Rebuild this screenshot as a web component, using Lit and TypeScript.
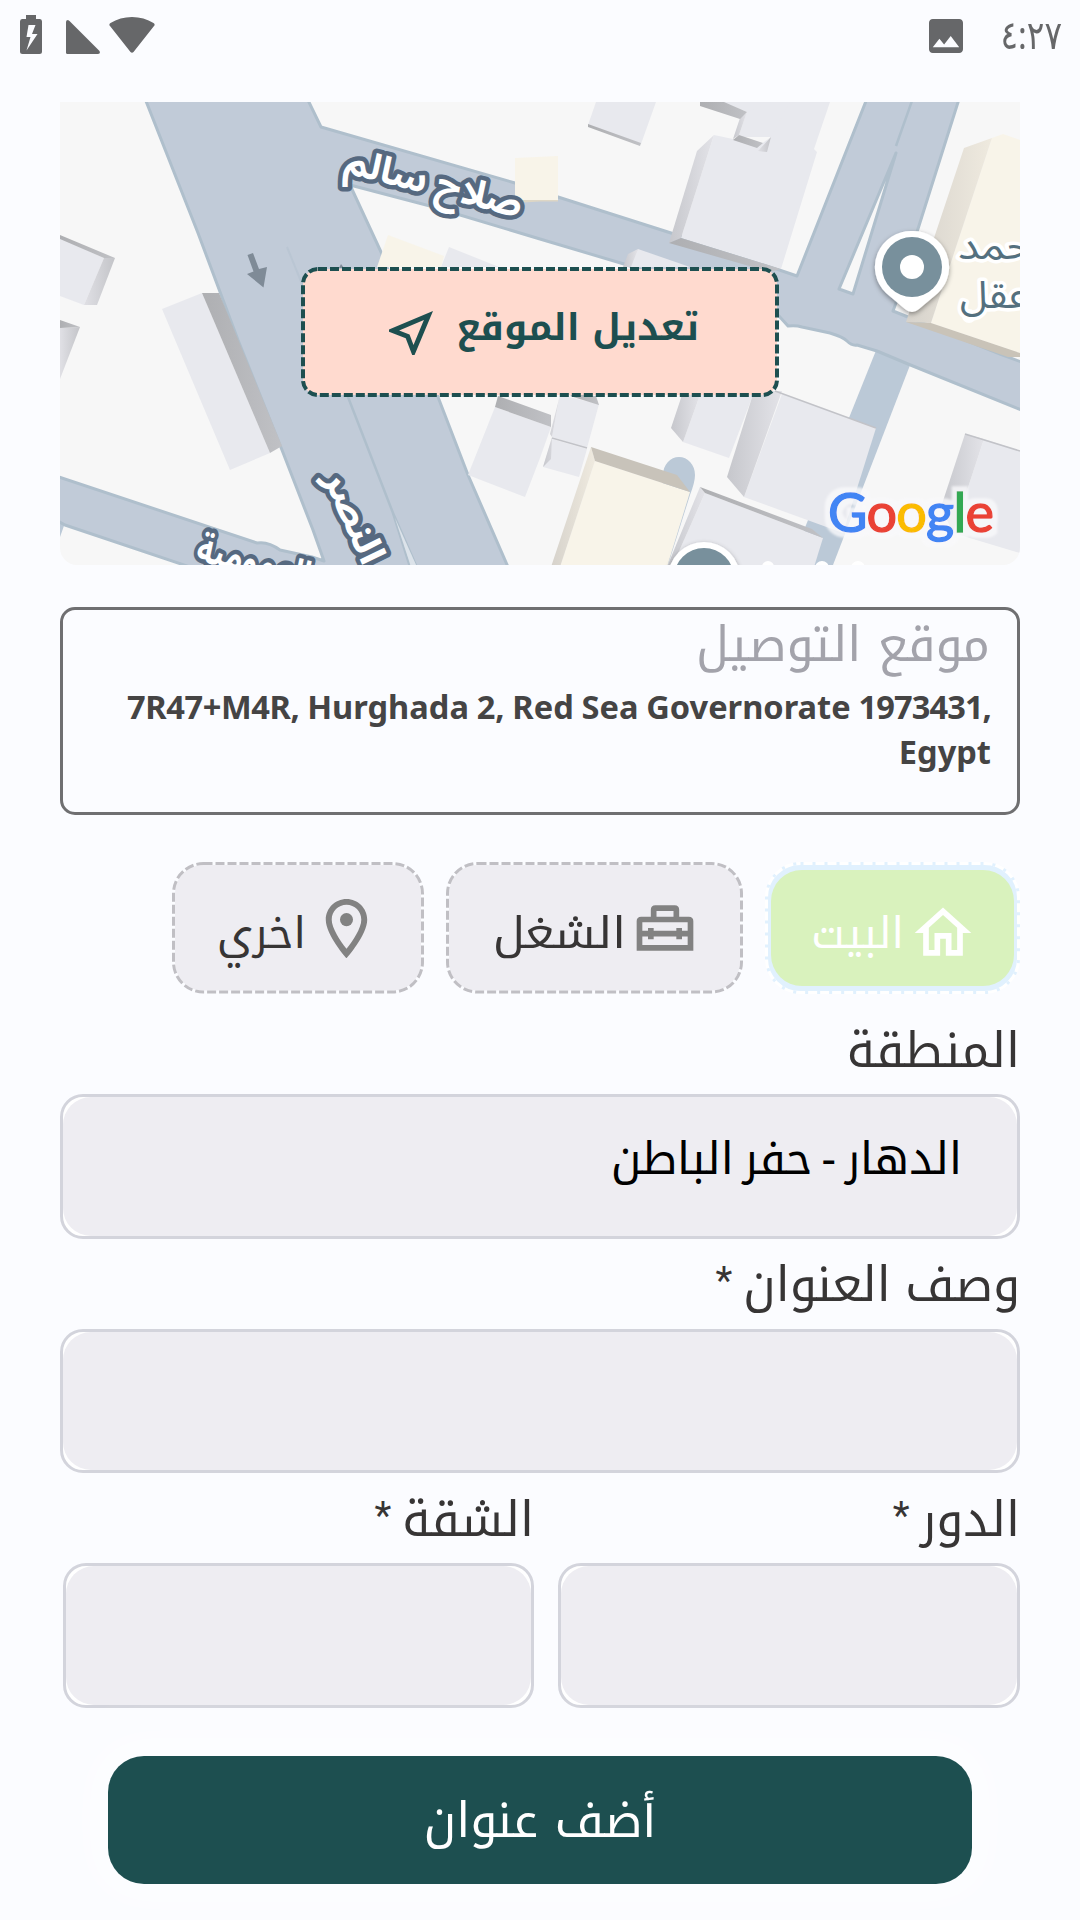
import { LitElement, html, css, svg } from "lit";
import { customElement, property } from "lit/decorators.js";

const HOME = "M12 5.69l5 4.5V18h-2v-6H9v6H7v-7.81l5-4.5M12 3L2 12h3v8h6v-6h2v6h6v-8h3L12 3z";
const WORK =
  "M7 8V5.6Q7 4 8.6 4H15.4Q17 4 17 5.6V8H20.4Q22 8 22 9.6V20H2V9.6Q2 8 3.600 8ZM9 8H15V6H9ZM4 10V13H6V12H8V13H16V12H18V13H20V10ZM4 15V18H20V15H18V16H16V15H8V16H6V15Z";
const PLACE =
  "M12 2C8.13 2 5 5.13 5 9c0 5.25 7 13 7 13s7-7.75 7-13c0-3.870-3.130-7-7-7zM7 9c0-2.760 2.240-5 5-5s5 2.240 5 5c0 2.880-2.880 7.190-5 9.880C9.920 16.210 7 11.850 7 9z";

@customElement("status-bar")
export class StatusBar extends LitElement {
  static styles = css`
    :host { display: flex; direction: rtl; justify-content: space-between; height: 102px; box-sizing: border-box; padding: 15px 18px 0 20px; color: #666769; }
    .side { display: flex; align-items: flex-start; }
    .time { width: 62px; font: 400 39px/38px "Noto Sans", "DejaVu Sans", sans-serif; transform: scaleX(0.84); transform-origin: right center; }
    .photo { margin: 4px 37px 0 0; }
    svg { display: block; fill: currentColor; }
    .wifi { margin: 2px 0 0 9px; }
    .cell { margin: 5px 0 0 24px; }
  `;
  render() {
    return html`
      <div class="side">
        <span class="time">٤:٢٧</span>
        <svg class="photo" width="34" height="34" viewBox="3 3 18 18"><path d="M21 19V5c0-1.100-.9-2-2-2H5c-1.100 0-2 .9-2 2v14c0 1.100.9 2 2 2h14c1.100 0 2-.9 2-2zM8.500 13.500l2.500 3.010L14.500 12l4.500 6H5l3.500-4.500z"/></svg>
      </div>
      <div class="side">
        <svg class="wifi" width="46" height="36" viewBox="0 0 46 36"><path d="M1 9Q-.5 7.500 1.500 6Q11 0 23 0T44.500 6Q46.500 7.500 45 9L24.500 35Q23 36.500 21.500 35Z"/></svg>
        <svg class="cell" width="34" height="34" viewBox="0 0 34 34"><path d="M0 2Q0 0 2 0L3.500 1L33 30.500L34 32Q34 34 32 34H1.500Q0 34 0 32.500Z"/></svg>
        <svg width="22" height="39" viewBox="0 0 22 39"><path fill-rule="evenodd" d="M6 0H16V4H20Q22 4 22 6.500V36.500Q22 39 19.500 39H2.500Q0 39 0 36.500V6.500Q0 4 2 4H6ZM8.500 10L6.500 22H10.500L6.500 35.500L17.500 19H12L15.500 10Z"/></svg>
      </div>`;
  }
}

const road = "#c1cbd8";
const edge = "#afbfcc";

@customElement("location-map")
export class LocationMap extends LitElement {
  static styles = css`
    :host { display: grid; place-items: center; width: 960px; height: 463px; border-radius: 0 0 17px 17px; overflow: hidden; direction: ltr; }
    .canvas, .edit { grid-area: 1 / 1; }
    .canvas { display: block; }
    .street { font: 700 37px "Noto Sans Arabic", "DejaVu Sans", sans-serif; fill: #fff; stroke: #566980; stroke-width: 9px; stroke-linejoin: round; paint-order: stroke; }
    .poi { font: 400 38px "Noto Sans Arabic", "DejaVu Sans", sans-serif; fill: #54707e; stroke: #fff; stroke-width: 7px; stroke-linejoin: round; paint-order: stroke; }
    .brand { font: 400 54px Lato, sans-serif; stroke-width: 1.5px; filter: url(#halo); }
    .edit { position: relative; display: flex; align-items: center; justify-content: space-between; direction: rtl; box-sizing: border-box; width: 478px; height: 130px; margin-bottom: 3px; padding: 0 80px 0 88px; color: #1d4f50; }
    .frame { position: absolute; inset: 0; }
    .caption { position: relative; font: 700 37.200px/60px "Noto Kufi Arabic", "DejaVu Sans", sans-serif; white-space: nowrap; margin-bottom: 8px; }
    .near { position: relative; margin-top: 1px; fill: currentColor; }
  `;
  render() {
    return html`
      <svg class="canvas" width="960" height="463" viewBox="60 102 960 463">
        <defs>
          <linearGradient id="wall" x1="0" x2="1"><stop offset="0" stop-color="#c6c7cc"/><stop offset="1" stop-color="#e3e3e8"/></linearGradient>
          <linearGradient id="wallR" x1="1" x2="0"><stop offset="0" stop-color="#c3c4c8"/><stop offset="1" stop-color="#e0e0e5"/></linearGradient>
          <linearGradient id="shade" x1="0" x2="1"><stop offset="0" stop-color="#aeafb2"/><stop offset="1" stop-color="#c0c1c5"/></linearGradient>
          <linearGradient id="sand" x1="0" x2="1"><stop offset="0" stop-color="#d6d2cb"/><stop offset="1" stop-color="#efeadf"/></linearGradient>
          <filter id="drop" x="-30%" y="-30%" width="160%" height="170%"><feDropShadow dx="0" dy="2" stdDeviation="2.500" flood-color="#000" flood-opacity=".4"/></filter>
          <filter id="halo" x="-10%" y="-30%" width="120%" height="160%">
            <feMorphology in="SourceAlpha" operator="dilate" radius="5" result="wide"/><feGaussianBlur in="wide" stdDeviation="1" result="soft"/>
            <feFlood flood-color="#f9f9fb" flood-opacity=".8"/><feComposite operator="in" in2="soft" result="glow"/>
            <feMerge><feMergeNode in="glow"/><feMergeNode in="SourceGraphic"/></feMerge>
          </filter>
        </defs>
        <rect x="60" y="102" width="960" height="463" fill="#f7f7f7"/>
        ${svg`
        <g fill="#bbc9d7">
          <path d="M877 348L912 360L833 565H790Z"/>
          <path d="M663 475A16 18 0 0 1 695 475Q695 482 690 495L668 565H655Z"/>
          <path d="M60 537L65 523H58Z"/>
        </g>
        <g fill=${road} stroke=${edge} stroke-width="3" stroke-linejoin="round">
          <path d="M144 96L198 233L238 340L282 450L313 530L324 561L312 557L280 550Q268 541 257 543L56 476V520L65 525L190 567H508L468 475L438 397L381 252L350 185L430 206L540 239L624 264L779 316L788 326Q796 325 802 327L830 333Q843 337 847 341Q852 346 857 345L877 351L908 364L1024 411V363L1000 354L893 311L897 300L917 232L960 96H868L797 276L671 233L558 197L515 183L321 127L306 96Z"/>
          <path fill="none" stroke-width="2.500" d="M348 397L393 513L418 570M393 513L411 570M913 98L896 146"/>
          <path fill="none" stroke-width="2" opacity=".4" d="M287 247L348 397"/>
          <path fill="#f7f7f7" stroke-width="3" d="M896 153L839 289L853 294Z"/>
        </g>`}
        <path d="M395 518L417 567H411Z" fill="#dce3ea"/>
        <g fill="#e8e9ee">
          <path d="M60 238L104 258L84 305L60 296Z"/>
          <path d="M162 309L202 293L270 453L230 470Z"/>
          <path d="M449 247L499 267H441Z"/>
          <path d="M596 102H656L641 144L588 125Z"/>
          <path d="M722 102H830L814 149L817 152L781 269L681 238L714 135L733 139L757 147L771 137L739 135L747 112Z"/>
          <path d="M638 249L690 267H628Z"/>
          <path d="M700 395H753L729 458L683 442Z"/>
          <path d="M782 394L876 428L843 533L744 497Z"/>
          <path d="M984 439L1020 451V553L953 533Z"/>
          <path d="M560 395L599 404L587 448L552 437ZM552 439L587 449L579 477L543 467Z"/>
          <path d="M495 407L551 427L540 458L525 497L468 475Z"/>
          <path d="M705 493L823 538L814 567H672Z"/>
        </g>
        <path d="M747 112L771 102H790L771 137L739 137Z" fill="#e8e9ee"/>
        <g fill="url(#wallR)">
          <path d="M104 258H115L97 305H84Z"/>
          <path d="M60 328L80 327L60 379Z"/>
          <path d="M758 151L771 137L767 152Z"/>
        </g>
        <g fill="url(#wall)">
          <path d="M697 151L714 135L681 238L669 243Z"/>
          <path d="M747 112L739 135L733 139L740 118Z"/>
          <path d="M628 254L638 249L631 267H623Z"/>
          <path d="M682 395H700L683 442L671 428Z"/>
          <path d="M754 391H782L744 497L727 477Z"/>
          <path d="M965 434L984 439L953 533L941 507Z"/>
          <path d="M560 395L552 437L550 434ZM552 437L551 459L543 467Z"/>
          <path d="M700 487L705 493L672 567H667Z"/>
        </g>
        <g fill="url(#shade)">
          <path d="M60 235L115 258H104L60 239Z"/>
          <path d="M60 320L80 327L60 328Z"/>
          <path d="M202 293H219L282 446L270 453Z"/>
          <path d="M588 124L641 143L640 146L588 127Z"/>
          <path d="M700 102H724L747 112L740 119L700 106Z"/>
          <path d="M739 135L763 143L757 148L733 140Z"/>
          <path d="M681 238L781 269L770 272L669 243Z"/>
          <path d="M498 396L551 415V427L495 407Z"/>
          <path d="M573 394L596 396L599 405L570 396Z"/>
          <path d="M700 487L812 529L823 538L705 493Z"/>
        </g>
        <path d="M775 391L876 428M552 438L587 448M965 434L1020 451" fill="none" stroke="#c2c3c8" stroke-width="1.500"/>
        <g fill="#f8f4e9">
          <path d="M515 158L558 156V200H515Z"/>
          <path d="M388 235L444 256L441 267H377Z"/>
          <path d="M992 138L1003 134L1020 140V353L931 323Z"/>
          <path d="M595 461L690 492L667 567H560Z"/>
        </g>
        <path d="M515 200H558V201.500H540L515 203Z" fill="#ddd6c5"/>
        <path d="M964 148L992 138L931 323L906 322Z" fill="url(#sand)"/>
        <path d="M906 322L931 323L1020 353V357H1008Z" fill="#c9c3b8"/>
        <path d="M591 447L595 461L560 567H551Z" fill="url(#sand)"/>
        <path d="M591 447L677 475L690 492L595 461Z" fill="#c8c3ba"/>
        <path d="M247.500 255L253 253L259 269L267 267L263.500 287.500L247 274L253.500 271.500Z" fill="#7f8b97"/>
        <path d="M339 268L341 264L344 268Z" fill="#7f8b97"/>
        <g filter="url(#drop)">
          <path d="M912 231A36 36 0 0 1 938 293L919 309Q912 315 905 309L886 293A36 36 0 0 1 912 231Z" fill="#fff"/>
        </g>
        <circle cx="912" cy="267" r="30" fill="#78909c"/>
        <circle cx="912" cy="267" r="12" fill="#fff"/>
        <circle cx="704" cy="578" r="36" fill="#fff" filter="url(#drop)"/>
        <circle cx="704" cy="578" r="30" fill="#78909c"/>
        <g fill="#fff"><circle cx="768" cy="567" r="6"/><circle cx="822" cy="568" r="7"/><circle cx="858" cy="568" r="7"/><circle cx="969" cy="316" r="7"/></g>
        <text class="poi" x="958" y="259" text-anchor="start" textLength="74" lengthAdjust="spacingAndGlyphs">حمد</text>
        <text class="poi" x="960" y="308" text-anchor="start" textLength="68" lengthAdjust="spacingAndGlyphs">عقل</text>
        <text class="street" transform="translate(431 195) rotate(14.500)" text-anchor="middle" textLength="182" lengthAdjust="spacingAndGlyphs">صلاح سالم</text>
        <text class="street" transform="translate(343 522) rotate(66)" text-anchor="middle" textLength="98" lengthAdjust="spacingAndGlyphs">النصر</text>
        <text class="street" transform="translate(251 574) rotate(14)" text-anchor="middle" textLength="116" lengthAdjust="spacingAndGlyphs">العمومية</text>
        <text class="brand" x="828" y="532" textLength="166" lengthAdjust="spacing"><tspan fill="#4285f4" stroke="#4285f4">G</tspan><tspan fill="#ea4335" stroke="#ea4335">o</tspan><tspan fill="#fbbc05" stroke="#fbbc05">o</tspan><tspan fill="#4285f4" stroke="#4285f4">g</tspan><tspan fill="#34a853" stroke="#34a853">l</tspan><tspan fill="#ea4335" stroke="#ea4335">e</tspan></text>
      </svg>
      <div class="edit">
        <svg class="frame" width="478" height="130"><rect x="2" y="2" width="474" height="126" rx="15" fill="#ffdacf" stroke="#1d4f50" stroke-width="4" stroke-dasharray="9 3"/></svg>
        <span class="caption">تعديل الموقع</span>
        <svg class="near" width="44" height="44" viewBox="3 3 18 18"><path d="M17.270 6.730l-4.240 10.130-1.320-3.420-.32-.83-.82-.32-3.430-1.330 10.130-4.230M21 3L3 10.530v.98l6.840 2.650L12.480 21h.98L21 3z"/></svg>
      </div>`;
  }
}

@customElement("place-chip")
export class PlaceChip extends LitElement {
  @property() label = "";
  @property() icon = "";
  @property({ type: Number }) width = 255;
  @property({ type: Boolean, reflect: true }) selected = false;
  @property({ type: Boolean, reflect: true }) wide = false;
  static styles = css`
    :host { display: block; }
    .chip { position: relative; display: flex; align-items: center; box-sizing: border-box; height: 132px; padding-right: 44px; gap: 6px; color: #373535; }
    .frame { position: absolute; inset: 0; }
    .icon { position: relative; fill: #828282; margin: 0 -1px; flex: none; }
    .pin { margin: 0 -3px 0 -2px; }
    .label { position: relative; padding-top: 11px; font: 400 43px/70px "Noto Kufi Arabic", "DejaVu Sans", sans-serif; white-space: nowrap; }
    :host([selected]) .chip { color: #fff; }
    :host([selected]) .icon { fill: #fff; top: 5px; }
    :host([wide]) .chip { padding-right: 45px; }
    :host([wide]) .label { transform: scaleX(1.1); transform-origin: right center; }
  `;
  render() {
    const w = this.width;
    return html`<div class="chip" style="width:${w}px">
      <svg class="frame" width=${w} height="132">
        ${this.selected
          ? svg`<rect x="1.500" y="1.500" width=${w - 3} height="129" rx="34" fill="#e1f1fe" stroke="#fff" stroke-width="3"/>
            <rect x="1.500" y="1.500" width=${w - 3} height="129" rx="34" fill="none" stroke="#e1f1fe" stroke-width="3" stroke-dasharray="3 9"/>
            <rect x="6" y="8" width=${w - 12} height="116" rx="31" fill="#d9f2bd"/>`
          : svg`<rect x="1.500" y="1.500" width=${w - 3} height="128.500" rx="30" fill="#eeedf2" stroke="#fbfcff" stroke-width="3"/>
            <rect x="1.500" y="1.500" width=${w - 3} height="128.500" rx="30" fill="none" stroke="#c0bfc4" stroke-width="3" stroke-dasharray="9 3"/>`}
      </svg>
      ${this.icon === PLACE
        ? html`<svg class="icon pin" width="73" height="71" viewBox="0 0 24 24"><path fill-rule="evenodd" d=${PLACE} /><circle cx="12" cy="9" r="2.200" /></svg>`
        : html`<svg class="icon" width="68" height="68" viewBox="0 0 24 24"><path fill-rule="evenodd" d=${this.icon} /></svg>`}
      <span class="label">${this.label}</span>
    </div>`;
  }
}

@customElement("address-field")
export class AddressField extends LitElement {
  @property() label = "";
  @property() value = "";
  @property({ type: Boolean }) required = false;
  static styles = css`
    :host { display: block; min-width: 0; }
    .label { display: flex; align-items: center; box-sizing: border-box; height: 90px; padding: 3px 0 0; gap: 11px; font: 400 48.300px/80px "Noto Kufi Arabic", "DejaVu Sans", sans-serif; word-spacing: -2px; color: #373535; white-space: nowrap; }
    .star { font: 400 39px/80px Roboto, sans-serif; margin-bottom: 8px; }
    .box { box-sizing: border-box; height: 144.5px; border: 3px solid #d3d4dc; border-radius: 23px; background: #fff; }
    .fill { display: flex; align-items: center; box-sizing: border-box; height: 100%; border-radius: 28px; background: #eeedf2; padding: 0 55px 14px 0; font: 400 45px/80px "Noto Kufi Arabic", "DejaVu Sans", sans-serif; word-spacing: -6px; color: #000; white-space: nowrap; }
  `;
  render() {
    return html`<div class="label"><span>${this.label}</span>${this.required ? html`<span class="star">*</span>` : ""}</div>
      <div class="box"><div class="fill">${this.value}</div></div>`;
  }
}

@customElement("app-root")
export class AppRoot extends LitElement {
  static styles = css`
    :host { display: block; height: 1920px; overflow: hidden; background: #fbfcff; direction: rtl; }
    .body { display: flex; flex-direction: column; padding: 0 60px; }
    .card { box-sizing: border-box; height: 208px; margin-top: 42px; border: 3px solid #6f6f71; border-radius: 15px; padding: 0 27px; }
    .title { font: 400 48.300px/70px "Noto Kufi Arabic", "DejaVu Sans", sans-serif; color: #a3a3ab; }
    .address { direction: ltr; text-align: right; margin: 4px -1px 0 0; font: 700 32.600px/45px "Noto Sans", sans-serif; word-spacing: -0.7px; color: #454444; white-space: nowrap; }
    .digits { letter-spacing: -0.9px; }
    .code { letter-spacing: -0.4px; }
    .chips { display: flex; align-items: flex-start; gap: 22px; height: 132px; margin: 47px 0 10px; }
    .pair { display: grid; grid-template-columns: 462px 471px; gap: 24px; }
    .submit { display: flex; align-items: center; justify-content: center; box-sizing: border-box; width: 864px; height: 128.5px; margin: 48px auto 0; padding-top: 3px; border-radius: 36px; background: #1d4f50; color: #fff; font: 400 48.300px/80px "Noto Kufi Arabic", "DejaVu Sans", sans-serif; box-shadow: 0 0 40px 30px rgba(255, 255, 255, 0.35); }
  `;
  render() {
    return html`
      <status-bar></status-bar>
      <div class="body">
        <location-map></location-map>
        <div class="card">
          <div class="title">موقع التوصيل</div>
          <div class="address"><span class="code">7R47+M4R,</span> Hurghada 2, Red Sea Governorate <span class="digits">1973431,</span><br />Egypt</div>
        </div>
        <div class="chips">
          <place-chip selected label="البيت" .icon=${HOME} .width=${255}></place-chip>
          <place-chip wide label="الشغل" .icon=${WORK} .width=${297}></place-chip>
          <place-chip label="اخري" .icon=${PLACE} .width=${252}></place-chip>
        </div>
        <address-field label="المنطقة" value="الدهار - حفر الباطن"></address-field>
        <address-field label="وصف العنوان" required></address-field>
        <div class="pair">
          <address-field label="الدور" required></address-field>
          <address-field label="الشقة" required></address-field>
        </div>
        <div class="submit">أضف عنوان</div>
      </div>`;
  }
}
